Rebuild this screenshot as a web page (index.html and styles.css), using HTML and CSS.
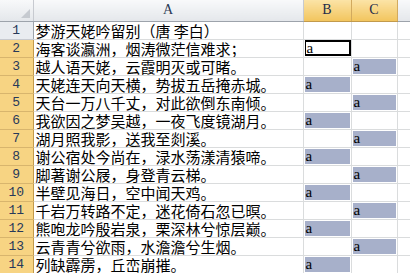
FILE: index.html
```html
<!DOCTYPE html>
<html lang="zh-CN">
<head>
    <meta charset="UTF-8">
    <title>梦游天姥吟留别</title>
    <link rel="stylesheet" href="styles.css">
</head>
<body>

<table class="sheet">
    <colgroup>
        <col class="w-head">
        <col class="w-a">
        <col class="w-b">
        <col class="w-c">
        <col class="w-d">
    </colgroup>
    <thead>
        <tr>
            <th class="corner"><span class="tri"></span></th>
            <th class="colHead">A</th>
            <th class="colHead on">B</th>
            <th class="colHead on">C</th>
            <th class="colHead"></th>
        </tr>
    </thead>
    <tbody>
        <tr><th class="rowHead">1</th><td class="txt">梦游天姥吟留别（唐&nbsp;李白）</td><td></td><td></td><td></td></tr>
        <tr><th class="rowHead on">2</th><td class="txt">海客谈瀛洲，烟涛微茫信难求；</td><td class="cur"><span>a</span></td><td></td><td></td></tr>
        <tr><th class="rowHead on">3</th><td class="txt">越人语天姥，云霞明灭或可睹。</td><td></td><td class="sel"><span>a</span></td><td></td></tr>
        <tr><th class="rowHead on">4</th><td class="txt">天姥连天向天横，势拔五岳掩赤城。</td><td class="sel"><span>a</span></td><td></td><td></td></tr>
        <tr><th class="rowHead on">5</th><td class="txt">天台一万八千丈，对此欲倒东南倾。</td><td></td><td class="sel"><span>a</span></td><td></td></tr>
        <tr><th class="rowHead on">6</th><td class="txt">我欲因之梦吴越，一夜飞度镜湖月。</td><td class="sel"><span>a</span></td><td></td><td></td></tr>
        <tr><th class="rowHead on">7</th><td class="txt">湖月照我影，送我至剡溪。</td><td></td><td class="sel"><span>a</span></td><td></td></tr>
        <tr><th class="rowHead on">8</th><td class="txt">谢公宿处今尚在，渌水荡漾清猿啼。</td><td class="sel"><span>a</span></td><td></td><td></td></tr>
        <tr><th class="rowHead on">9</th><td class="txt">脚著谢公屐，身登青云梯。</td><td></td><td class="sel"><span>a</span></td><td></td></tr>
        <tr><th class="rowHead on">10</th><td class="txt">半壁见海日，空中闻天鸡。</td><td class="sel"><span>a</span></td><td></td><td></td></tr>
        <tr><th class="rowHead on">11</th><td class="txt">千岩万转路不定，迷花倚石忽已暝。</td><td></td><td class="sel"><span>a</span></td><td></td></tr>
        <tr><th class="rowHead on">12</th><td class="txt">熊咆龙吟殷岩泉，栗深林兮惊层巅。</td><td class="sel"><span>a</span></td><td></td><td></td></tr>
        <tr><th class="rowHead on">13</th><td class="txt">云青青兮欲雨，水澹澹兮生烟。</td><td></td><td class="sel"><span>a</span></td><td></td></tr>
        <tr><th class="rowHead on">14</th><td class="txt">列缺霹雳，丘峦崩摧。</td><td class="sel"><span>a</span></td><td></td><td></td></tr>
    </tbody>
</table>

</body>
</html>
```

FILE: styles.css
```css
* {margin:0;padding:0;box-sizing:border-box;}
html,body {width:100%;height:100%;background:#fff;overflow:hidden;}

.sheet{
    table-layout: fixed;
    border-collapse: collapse;
    width: 411px;
    font-family: "Liberation Mono", monospace;
    font-size: 13px;
    color: #000;
}
.w-head{width: 33px;}
.w-a{width: 270px;}
.w-b{width: 48px;}
.w-c{width: 46px;}
.w-d{width: 14px;}

/* 表头 */
.sheet thead th{
    height: 21px;
    font-family: "Liberation Serif", serif;
    font-size: 14px;
    font-weight: normal;
    border-right: 1px solid #c7cad0;
    border-bottom: 1px solid #9da3ab;
    background: linear-gradient(#f8f9fa, #e4e7eb);
    color: #2b3a55;
    vertical-align: middle;
    text-align: center;
}
.sheet thead th.on{
    background: linear-gradient(#fbe3a6, #f2c55e);
    border-right-color: #d2aa5e;
    border-bottom-color: #c29a4c;
    color: #1d2b4a;
}
.corner{
    position: relative;
}
.corner .tri{
    position: absolute;
    right: 3px;
    bottom: 3px;
    width: 0;
    height: 0;
    border-left: 9px solid transparent;
    border-bottom: 9px solid #c6cad0;
}

/* 行号 */
.rowHead{
    height: 18px;
    font-weight: normal;
    text-align: center;
    vertical-align: bottom;
    padding-bottom: 1px;
    line-height: 15px;
    background: #e9ecf0;
    border-right: 1px solid #9da3ab;
    border-bottom: 1px solid #c7cad0;
    color: #27395a;
}
.rowHead.on{
    background: #f7d483;
    border-bottom-color: #d8b56d;
    border-right-color: #c29a4c;
}

/* 单元格 */
.sheet td{
    height: 18px;
    border-right: 1px solid #dadcdd;
    border-bottom: 1px solid #dadcdd;
    vertical-align: bottom;
    white-space: nowrap;
    overflow: hidden;
}
.txt{
    font-family: "Noto Sans CJK SC", sans-serif;
    font-size: 15px;
    line-height: 16px;
    padding-left: 2px;
    overflow: visible;
}
.sel span,
.cur span{
    display: block;
    height: 15px;
    margin: 1px 1px 1px 1px;
    padding-left: 1px;
    font-family: "Liberation Serif", serif;
    font-size: 15px;
    line-height: 14px;
}
.sel span{
    background: #a7b0ca;
}
.cur span{
    margin: 0 0 1px 1px;
    height: 16px;
    border: 2px solid #000;
    border-left-width: 1px;
    line-height: 12px;
}
```
